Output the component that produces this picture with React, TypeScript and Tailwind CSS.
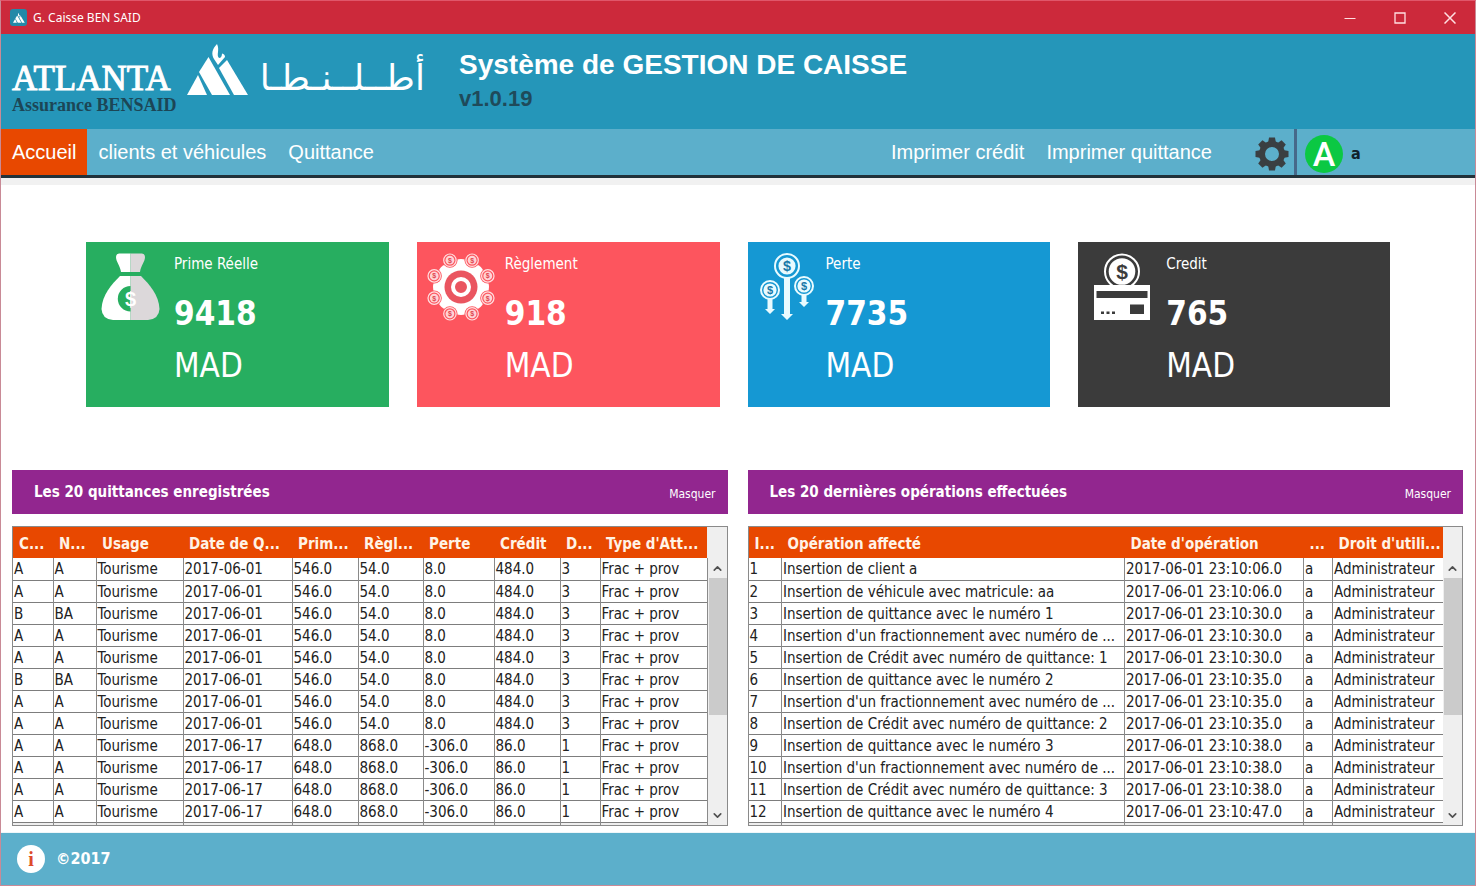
import type { ReactNode } from 'react';
import { ChevronDown, ChevronUp } from 'lucide-react';

const ui = "font-['DejaVu_Sans_Condensed','DejaVu_Sans',sans-serif]";
const helv = "font-['Liberation_Sans',Arial,sans-serif]";

function LogoMark({ className }: { className: string }) {
  return (
    <svg viewBox="0 0 62 52" className={className} fill="currentColor" aria-hidden="true">
      <path d="M0 51 L11 31 L20 51 Z" />
      <path d="M12 28 L21.500 13 L43 51 L25 51 Z" />
      <path d="M32 24 L40 16 L61 51 L47 51 Z" />
      <path d="M30 0 C25 5 24 10 27 15 L31 21 L38 13 C38 11 37 10 35 9.500 C35 12 34 14 32 14 C29 11 33 6 30 0 Z" />
    </svg>
  );
}

function Dollar({ x, y, size, fill }: { x: number; y: number; size: number; fill: string }) {
  return (
    <text x={x} y={y + size * 0.35} fontSize={size} fill={fill} textAnchor="middle" fontWeight="bold" fontFamily="Liberation Sans, sans-serif">
      $
    </text>
  );
}

function MoneyBag() {
  return (
    <svg width="59" height="67" viewBox="0 0 59 67" aria-hidden="true">
      <path d="M18 0.500 H29.500 V19 H20 C19 12 15 9 15 4 Q15 1 18 0.500 Z" fill="#fff" />
      <path d="M41 0.500 H29.500 V19 H39 C40 12 44 9 44 4 Q44 1 41 0.500 Z" fill="#dcd8da" />
      <path d="M19 23 H29.500 V67 H12 Q1 66 0.500 56 C1 42 11 31 19 23 Z" fill="#fff" />
      <path d="M40 23 H29.500 V67 H47 Q58 66 58.500 56 C58 42 48 31 40 23 Z" fill="#dcd8da" />
      <path d="M29.500 33 A12.700 12.700 0 0 0 29.500 58.400 Z" fill="#27ae60" />
      <Dollar x={29.5} y={45.7} size={20} fill="#fff" />
    </svg>
  );
}

function CoinGear() {
  const teeth = [0, 45, 90, 135, 180, 225, 270, 315];
  return (
    <svg width="68" height="68" viewBox="-34 -34 68 68" aria-hidden="true">
      <circle r="24" fill="#fff" />
      {teeth.map((a) => (
        <path key={a} transform={`rotate(${a})`} d="M-8 -20 L-5 -27 Q0 -29 5 -27 L8 -20 Z" fill="#fff" />
      ))}
      {teeth.map((a) => {
        const t = ((a + 22.5) * Math.PI) / 180;
        const x = 29 * Math.cos(t);
        const y = 29 * Math.sin(t);
        return (
          <g key={a}>
            <circle cx={x} cy={y} r="7.600" fill="#fd555e" />
            <circle cx={x} cy={y} r="6.200" fill="none" stroke="#ffdfe0" strokeWidth="1.200" />
            <circle cx={x} cy={y} r="4.400" fill="#ffd3d5" />
            <Dollar x={x} y={y} size={7} fill="#e0454f" />
          </g>
        );
      })}
      <circle r="16.500" fill="#ea5560" />
      <circle r="8" fill="none" stroke="#fff" strokeWidth="4" />
    </svg>
  );
}

function DropCoin({ x, y, r, end, w }: { x: number; y: number; r: number; end: number; w: number }) {
  return (
    <g>
      <path
        d={`M${x - w / 2} ${y + r - 1} H${x + w / 2} V${end - w} H${x + w} L${x} ${end} L${x - w} ${end - w} H${x - w / 2} Z`}
        fill="#e9fbff"
      />
      <circle cx={x} cy={y} r={r - 1} fill="#1598d3" stroke="#e9fbff" strokeWidth="2" />
      <circle cx={x} cy={y} r={r * 0.66} fill="#e9fbff" />
      <Dollar x={x} y={y} size={r * 1.1} fill="#1879a8" />
    </g>
  );
}

function FallingCoins() {
  return (
    <svg width="54" height="67" viewBox="0 0 54 67" aria-hidden="true">
      <DropCoin x={27} y={13} r={13} end={67} w={6} />
      <DropCoin x={10} y={37} r={10} end={61} w={5} />
      <DropCoin x={44} y={33} r={10} end={54} w={5} />
    </svg>
  );
}

function CreditCardCoin() {
  return (
    <svg width="56" height="67" viewBox="0 0 56 67" aria-hidden="true">
      <circle cx="28" cy="18.500" r="17" fill="none" stroke="#fff" strokeWidth="2" />
      <circle cx="28" cy="18.500" r="13.300" fill="#fff" />
      <Dollar x={28} y={18.5} size={21} fill="#3b3b3b" />
      <path d="M0 32 H56 V67 H0 Z" fill="#fff" />
      <path d="M2.500 38 H53.500 V45 H2.500 Z M36 51.500 H50 V61 H36 Z" fill="#3b3b3b" />
      <path d="M7 58.500 h3 v2.500 h-3 Z M12.500 58.500 h3 v2.500 h-3 Z M18 58.500 h3 v2.500 h-3 Z" fill="#3b3b3b" />
    </svg>
  );
}

function Gear() {
  const teeth = [0, 45, 90, 135, 180, 225, 270, 315];
  return (
    <svg width="34" height="34" viewBox="-17 -17 34 34" aria-hidden="true">
      <circle r="10" fill="none" stroke="#3a3f42" strokeWidth="6" />
      {teeth.map((a) => (
        <path key={a} transform={`rotate(${a})`} d="M-4 -11 L-3 -16.500 H3 L4 -11 Z" fill="#3a3f42" />
      ))}
    </svg>
  );
}

type StatProps = { label: string; value: string; color: string; iconBox: string; icon: ReactNode };

function Stat({ label, value, color, iconBox, icon }: StatProps) {
  return (
    <section className={`flex h-[165px] gap-[10px] pl-[10px] pt-[11px] text-white ${color}`}>
      <div className={`flex shrink-0 items-start justify-center ${iconBox}`}>{icon}</div>
      <div>
        <h2 className="pt-px text-[15px] leading-5">{label}</h2>
        <p className="mt-4 text-[33px] font-bold leading-[48px]">{value}</p>
        <p className="text-[33px] leading-[56px]">MAD</p>
      </div>
    </section>
  );
}

type Column = { name: string; width: string };

function Panel({ title, columns, rows }: { title: string; columns: Column[]; rows: string[][] }) {
  return (
    <section className="min-w-0">
      <div className="flex h-11 items-center justify-between bg-[#92268f] pl-[22px] pr-3 text-white">
        <h2 className="pt-px text-[15px] font-bold">{title}</h2>
        <button type="button" className="pt-1 text-[12px]">Masquer</button>
      </div>
      <div className="mt-3 flex h-[300px] overflow-hidden border border-[#8a8a8a]">
        <div className="min-w-0 flex-1 overflow-hidden bg-[#eeeeee]">
          <table className="w-full table-fixed border-collapse">
            <colgroup>
              {columns.map((c, i) => (
                <col key={i} className={c.width} />
              ))}
            </colgroup>
            <thead>
              <tr className="h-[31px] bg-[#e84800]">
                {columns.map((c, i) => (
                  <th key={i} className="overflow-hidden whitespace-nowrap p-0 pl-[6px] pt-[2px] text-left text-[15px] font-bold leading-5 text-[#fff3e6]">
                    {c.name}
                  </th>
                ))}
              </tr>
            </thead>
            <tbody>
              {rows.map((r, i) => (
                <tr key={i} className="h-[22px] border-b border-[#7d7d7d] bg-white">
                  {r.map((v, j) => (
                    <td key={j} className="overflow-hidden whitespace-nowrap border-r border-[#8a8a8a] p-0 pl-px pt-px text-[15px] leading-5 text-[#222]">
                      {v}
                    </td>
                  ))}
                </tr>
              ))}
              <tr className="h-[22px]" aria-hidden="true">
                {columns.map((_, j) => (
                  <td key={j} className="border-r border-[#8a8a8a] p-0" />
                ))}
              </tr>
            </tbody>
          </table>
        </div>
        <div className="flex w-[19px] shrink-0 flex-col bg-[#efefef] pt-[31px]">
          <button type="button" aria-label="Monter" className="flex h-5 items-center justify-center text-[#505050]">
            <ChevronUp size={13} strokeWidth={3} />
          </button>
          <div className="ml-px h-[137px] bg-[#cbcbcb]" />
          <button type="button" aria-label="Descendre" className="mt-auto flex h-5 items-center justify-center text-[#505050]">
            <ChevronDown size={13} strokeWidth={3} />
          </button>
        </div>
      </div>
    </section>
  );
}

const receiptColumns: Column[] = [
  { name: 'C...', width: 'w-[40px]' },
  { name: 'N...', width: 'w-[43px]' },
  { name: 'Usage', width: 'w-[87px]' },
  { name: 'Date de Q...', width: 'w-[109px]' },
  { name: 'Prim...', width: 'w-[66px]' },
  { name: 'Règl...', width: 'w-[65px]' },
  { name: 'Perte', width: 'w-[71px]' },
  { name: 'Crédit', width: 'w-[66px]' },
  { name: 'D...', width: 'w-[40px]' },
  { name: "Type d'Att...", width: 'w-[107px]' },
];

const receipts: string[][] = [
  ...['A', 'A', 'B', 'A', 'A', 'B', 'A', 'A'].map((c) => [
    c, c === 'B' ? 'BA' : 'A', 'Tourisme', '2017-06-01', '546.0', '54.0', '8.0', '484.0', '3', 'Frac + prov',
  ]),
  ...['A', 'A', 'A', 'A'].map((c) => [
    c, 'A', 'Tourisme', '2017-06-17', '648.0', '868.0', '-306.0', '86.0', '1', 'Frac + prov',
  ]),
];

const operationColumns: Column[] = [
  { name: 'I...', width: 'w-[33px]' },
  { name: 'Opération affecté', width: 'w-[343px]' },
  { name: "Date d'opération", width: 'w-[179px]' },
  { name: '...', width: 'w-[29px]' },
  { name: "Droit d'utili...", width: 'w-[111px]' },
];

const operations: string[][] = [
  ['Insertion de client a', '06'],
  ['Insertion de véhicule avec matricule: aa', '06'],
  ['Insertion de quittance avec le numéro 1', '30'],
  ["Insertion d'un fractionnement avec numéro de ...", '30'],
  ['Insertion de Crédit avec numéro de quittance: 1', '30'],
  ['Insertion de quittance avec le numéro 2', '35'],
  ["Insertion d'un fractionnement avec numéro de ...", '35'],
  ['Insertion de Crédit avec numéro de quittance: 2', '35'],
  ['Insertion de quittance avec le numéro 3', '38'],
  ["Insertion d'un fractionnement avec numéro de ...", '38'],
  ['Insertion de Crédit avec numéro de quittance: 3', '38'],
  ['Insertion de quittance avec le numéro 4', '47'],
].map(([text, s], i) => [String(i + 1), text, `2017-06-01 23:10:${s}.0`, 'a', 'Administrateur']);

export default function App() {
  return (
    <div className={`flex min-h-screen flex-col border border-[#c98a96] border-t-[#e0566a] bg-white ${ui}`}>
      <div className="flex h-[33px] items-center bg-[#cc293b] pl-[9px] text-white">
        <span className="flex size-[17px] items-center justify-center rounded-[3px] bg-[#2389a8]">
          <LogoMark className="h-[10px] w-3" />
        </span>
        <span className="ml-[6px] font-['Noto_Sans',sans-serif] text-[12px] leading-4">G. Caisse BEN SAID</span>
        <div className="ml-auto flex text-[#ffdfe2]">
          <button type="button" aria-label="Réduire" className="flex h-8 w-[50px] items-center justify-center">
            <svg width="12" height="12" viewBox="0 0 12 12" stroke="currentColor"><path d="M0.500 6.500 H11.500" /></svg>
          </button>
          <button type="button" aria-label="Agrandir" className="flex h-8 w-[50px] items-center justify-center">
            <svg width="12" height="12" viewBox="0 0 12 12" fill="none" stroke="currentColor" strokeWidth="1.300"><path d="M1 1 H11 V11 H1 Z" /></svg>
          </button>
          <button type="button" aria-label="Fermer" className="flex h-8 w-[50px] items-center justify-center">
            <svg width="12" height="12" viewBox="0 0 12 12" stroke="currentColor" strokeWidth="1.500"><path d="M0.500 0.500 L11.500 11.500 M11.500 0.500 L0.500 11.500" /></svg>
          </button>
        </div>
      </div>

      <header className="flex h-[95px] items-start bg-[#2596b9] pl-[11px] text-white">
        <div className="w-[175px] pt-[28px] font-['Liberation_Serif',serif]">
          <div className="text-[35px] leading-[34px] [-webkit-text-stroke:1px_#fff]">ATLANTA</div>
          <div className="whitespace-nowrap text-[18px] font-bold leading-[18px] text-[#1c4656]">Assurance BENSAID</div>
        </div>
        <LogoMark className="mt-[10px] h-[52px] w-[62px]" />
        <div dir="rtl" lang="ar" className="ml-3 w-[164px] whitespace-nowrap pt-[18px] font-['DejaVu_Sans',sans-serif] text-[36px] leading-[52px]">
          أطــلــنـطـا
        </div>
        <div className={`ml-[34px] pt-[14px] ${helv}`}>
          <h1 className="text-[28px] font-bold leading-[34px]">Système de GESTION DE CAISSE</h1>
          <p className="text-[22px] font-bold leading-[34px] text-[#1f4a5a]">v1.0.19</p>
        </div>
      </header>

      <nav className={`flex h-[49px] items-stretch border-b-[3px] border-[#22323a] bg-[#5cafcb] text-[20px] text-white ${helv}`}>
        <a href="#accueil" className="flex items-center bg-[#e84800] px-[11px]">Accueil</a>
        <a href="#clients" className="flex items-center px-[11px]">clients et véhicules</a>
        <a href="#quittance" className="flex items-center px-[11px]">Quittance</a>
        <a href="#imprimer-credit" className="ml-auto flex items-center px-[11px]">Imprimer crédit</a>
        <a href="#imprimer-quittance" className="flex items-center px-[11px]">Imprimer quittance</a>
        <button type="button" aria-label="Paramètres" className="ml-8 flex items-center pr-[5px] pt-1">
          <Gear />
        </button>
        <div className="flex w-[181px] items-center border-l-[3px] border-[#46698a] pl-2 pt-1">
          <span className="flex size-[38px] items-center justify-center rounded-full bg-[#0bc843] font-['Roboto',sans-serif] text-[34px] font-medium leading-none">A</span>
          <span className={`ml-2 text-[16px] font-bold text-[#10222b] ${ui}`}>a</span>
        </div>
      </nav>

      <main className="flex-1 border-t-[7px] border-[#f1f1f1] pb-[6px]">
        <div className="grid grid-cols-[303fr_303fr_303fr_312fr] gap-7 px-[85px] pt-[57px]">
          <Stat label="Prime Réelle" value="9418" color="bg-[#27ae60]" iconBox="w-[68px]" icon={<MoneyBag />} />
          <Stat label="Règlement" value="918" color="bg-[#fd555e]" iconBox="w-[68px]" icon={<CoinGear />} />
          <Stat label="Perte" value="7735" color="bg-[#1598d3]" iconBox="w-[58px]" icon={<FallingCoins />} />
          <Stat label="Credit" value="765" color="bg-[#3b3b3b]" iconBox="w-[68px]" icon={<CreditCardCoin />} />
        </div>
        <div className="mt-[63px] grid grid-cols-2 gap-5 pl-[11px] pr-3">
          <Panel title="Les 20 quittances enregistrées" columns={receiptColumns} rows={receipts} />
          <Panel title="Les 20 dernières opérations effectuées" columns={operationColumns} rows={operations} />
        </div>
      </main>

      <footer className="flex h-[53px] items-center border-t border-[#eef6f9] bg-[#5cafcb] pl-4 text-white">
        <span className="flex size-7 items-center justify-center rounded-full bg-white font-['Liberation_Serif',serif] text-[20px] font-bold leading-none text-[#dd4b2a]">i</span>
        <span className="ml-[11px] text-[16px] font-bold">©2017</span>
      </footer>
    </div>
  );
}
